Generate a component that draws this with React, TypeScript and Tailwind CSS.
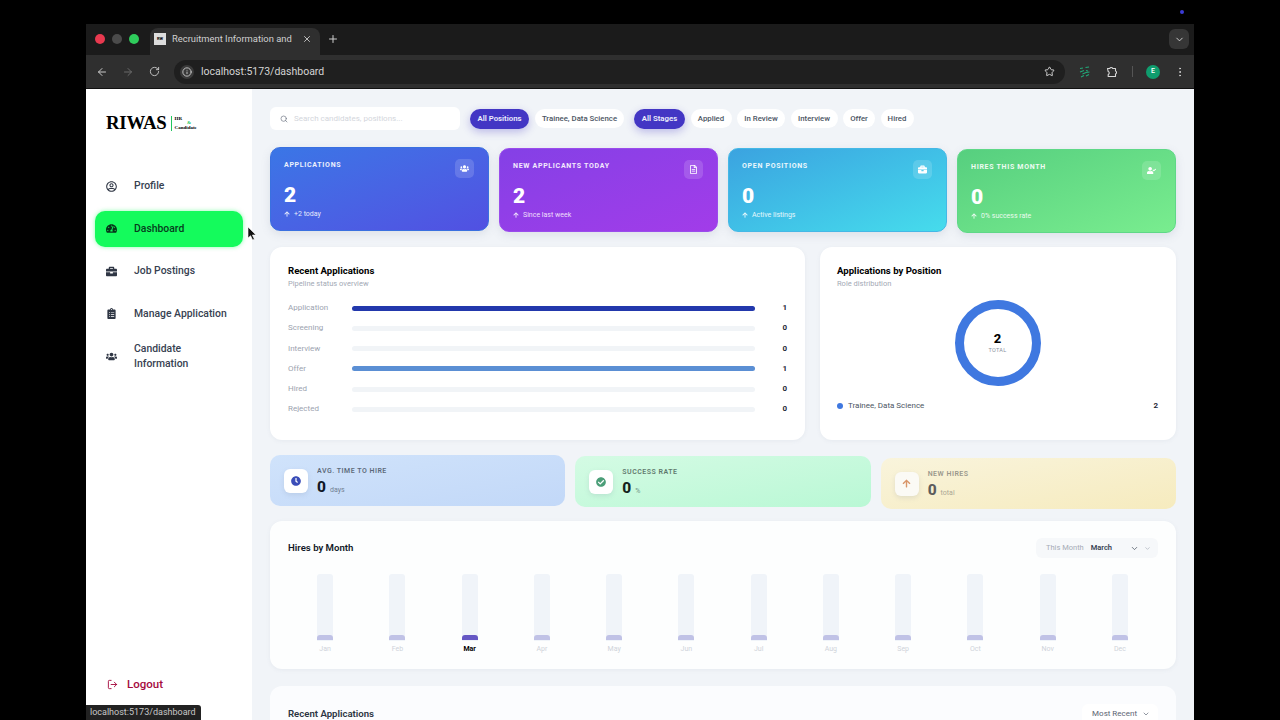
import { ArrowLeft, ArrowRight, ChevronDown, EllipsisVertical, Info, LogOut, Plus, RotateCw, Search, Star, X } from "lucide-react"
import { FaArrowUp, FaBriefcase, FaCheckCircle, FaClipboardList, FaClock, FaRegFileAlt, FaRegUserCircle, FaTachometerAlt, FaUserCheck, FaUsers } from "react-icons/fa"

const nav = [
  { label: "Profile", icon: FaRegUserCircle },
  { label: "Dashboard", icon: FaTachometerAlt, active: true },
  { label: "Job Postings", icon: FaBriefcase },
  { label: "Manage Application", icon: FaClipboardList },
]

const cards = [
  { title: "APPLICATIONS", value: "2", note: "+2 today", icon: FaUsers, bg: "mt-0 bg-gradient-to-br from-[#3a76e6] to-[#5150e2] border-[#3a70e0]", text: "text-[#e4e9fd]" },
  { title: "NEW APPLICANTS TODAY", value: "2", note: "Since last week", icon: FaRegFileAlt, bg: "mt-[0.5px] bg-gradient-to-br from-[#8440e6] to-[#a23ce9] border-[#9a4cec]", text: "text-[#efdffc]" },
  { title: "OPEN POSITIONS", value: "0", note: "Active listings", icon: FaBriefcase, bg: "mt-px bg-gradient-to-br from-[#3ba3e0] to-[#46dcec] border-[#45b8e6]", text: "text-[#e6f8fc]" },
  { title: "HIRES THIS MONTH", value: "0", note: "0% success rate", icon: FaUserCheck, bg: "mt-[2px] bg-gradient-to-br from-[#56cf7f] to-[#79ed8f] border-[#5fd887]", text: "text-[#e9fbee]" },
]

const stages = [
  { label: "Application", value: 1, color: "bg-[#2238ac]" },
  { label: "Screening", value: 0, color: "" },
  { label: "Interview", value: 0, color: "" },
  { label: "Offer", value: 1, color: "bg-[#5b8fd4]" },
  { label: "Hired", value: 0, color: "" },
  { label: "Rejected", value: 0, color: "" },
]

const months = ["Jan", "Feb", "Mar", "Apr", "May", "Jun", "Jul", "Aug", "Sep", "Oct", "Nov", "Dec"]

function Chip({ label, width, active }: { label: string; width: string; active?: boolean }) {
  return (
    <span
      className={
        active
          ? `flex h-[20px] items-center justify-center rounded-full bg-[#4336c4] text-[7.8px] font-semibold text-[#eeeefc] shadow-[0_3px_8px_rgba(67,54,196,0.3)] ${width}`
          : `flex h-[19px] items-center justify-center rounded-full bg-white text-[7.8px] font-medium text-[#4b5563] ${width}`
      }
    >
      {label}
    </span>
  )
}

function Browser() {
  return (
    <div className="font-[Roboto,sans-serif]">
      <div className="flex h-[31px] items-end bg-[#1b1b1b] pl-[9px]">
        <div className="mb-[11px] flex items-center gap-[7px]">
          <span className="h-[10px] w-[10px] rounded-full bg-[#e8394f]" />
          <span className="h-[10px] w-[10px] rounded-full bg-[#4b4b4b]" />
          <span className="h-[10px] w-[10px] rounded-full bg-[#2fcc5c]" />
        </div>
        <div className="ml-[11px] flex h-[27px] w-[170px] items-center rounded-t-[8px] bg-[#2f2f2f] pb-[5px] pl-[4px]">
          <span className="flex h-[12px] w-[12px] items-center justify-center bg-[#ddd] text-[4px] font-bold text-black">RW</span>
          <span className="ml-[6px] w-[122px] overflow-hidden whitespace-nowrap text-[9.4px] text-[#d0d0d0]">Recruitment Information and</span>
          <X size={10} className="ml-[8px] text-[#d8d8d8]" />
        </div>
        <Plus size={12} className="mb-[10px] ml-[7px] text-[#cfcfcf]" />
        <div className="mb-[6px] ml-auto mr-[5px] flex h-[20px] w-[20px] items-center justify-center rounded-md bg-[#363636]">
          <ChevronDown size={11} className="text-[#d8d8d8]" />
        </div>
      </div>
      <div className="flex h-[34px] items-center border-b border-[#111] bg-[#2f2f2f] pl-[10px]">
        <ArrowLeft size={12} className="text-[#c9c9c9]" />
        <ArrowRight size={12} className="ml-[14px] text-[#6b6b6b]" />
        <RotateCw size={11} className="ml-[15px] text-[#c9c9c9]" />
        <div className="ml-[14px] flex h-[24px] w-[891px] items-center rounded-full bg-[#1f1f1f] pl-[6px]">
          <span className="flex h-[14px] w-[14px] items-center justify-center rounded-full bg-[#3a3a3a]">
            <Info size={10} className="text-[#d8d8d8]" />
          </span>
          <span className="ml-[7px] text-[10.5px] text-[#d4d4d4]">localhost:5173/dashboard</span>
          <Star size={11} className="ml-auto mr-[10px] text-[#dcdcdc]" />
        </div>
        <svg width="12" height="12" viewBox="0 0 12 12" className="ml-[14px]" fill="none" stroke="#22a878" strokeWidth="1.1">
          <path d="M1 2.5 4 2M6.5 1.5 10 1M1 6 5 4.5M7 4.5 9 5M3.5 8 7 6.5 10.5 6M2 11 5 9.5M7 10 10 8.5" />
        </svg>
        <svg width="13" height="13" viewBox="0 0 13 13" className="ml-[15px]" fill="none" stroke="#d8d8d8" strokeWidth="1.1" strokeLinejoin="round">
          <path d="M1.5 3.5h2.2a1.6 1.6 0 0 1 3 0h2.8v2.4a1.6 1.6 0 0 1 0 3v2.6H2.2V9.6a1.6 1.6 0 0 0 0-3z" />
        </svg>
        <span className="ml-[13px] h-[11px] w-px bg-[#555]" />
        <span className="ml-[13px] flex h-[14px] w-[14px] items-center justify-center rounded-full bg-[#0f9d6e] text-[7px] font-medium text-white">E</span>
        <EllipsisVertical size={12} className="ml-[14px] text-[#cfcfcf]" />
      </div>
    </div>
  )
}

function Sidebar() {
  return (
    <aside className="flex w-[166px] shrink-0 flex-col bg-white font-[Roboto,sans-serif]">
      <div className="flex h-[32px] items-center pl-[20px] pt-[34px]">
        <span className="font-['Liberation_Serif',serif] text-[18.8px] font-bold leading-none tracking-[-0.2px] text-black">RIWAS</span>
        <span className="ml-[4px] h-[15px] w-px bg-[#22c55e]" />
        <div className="ml-[3px] font-['Liberation_Serif',serif] text-[5px] font-bold leading-[5px] text-black">
          <div className="flex h-[9px] items-start">
            HR
            <span className="ml-[5px] self-end text-[#22c55e]">&amp;</span>
          </div>
          <div>Candidate</div>
        </div>
      </div>
      <nav className="mt-[45px] flex flex-col gap-[6.5px] px-[9px]">
        {nav.map((item) => (
          <div
            key={item.label}
            className={
              item.active
                ? "flex h-[36px] w-[148px] items-center rounded-[10px] bg-[#14fb5c] pl-[11px] text-[#063d1c] shadow-[0_0_4px_rgba(20,251,92,0.5)]"
                : "flex h-[36px] items-center pl-[11px] text-[#374151]"
            }
          >
            <item.icon size={11} className={item.active ? "text-[#07331a]" : "text-[#2f3644]"} />
            <span className="ml-[17px] text-[10.4px] font-medium">{item.label}</span>
          </div>
        ))}
        <div className="flex h-[36px] items-center pl-[11px] text-[#374151]">
          <FaUsers size={11} className="text-[#2f3644]" />
          <span className="ml-[17px] text-[10.4px] font-medium leading-[15.5px]">
            Candidate
            <br />
            Information
          </span>
        </div>
      </nav>
      <div className="mb-[27px] mt-auto flex items-center pl-[21px] text-[#a50a3d]">
        <LogOut size={11} />
        <span className="ml-[9px] text-[11.5px] font-medium">Logout</span>
      </div>
    </aside>
  )
}

function StatCard({ card }: { card: (typeof cards)[number] }) {
  return (
    <div className={`h-[84px] rounded-[10px] border pl-[13px] pr-[14px] pt-[11px] shadow-[0_3px_10px_rgba(100,116,139,0.15)] ${card.bg}`}>
      <div className="flex items-start justify-between">
        <span className="pt-[1px] text-[7px] font-bold tracking-[0.7px] text-white/90">{card.title}</span>
        <span className="flex h-[19px] w-[19px] items-center justify-center rounded-[5px] bg-white/15">
          <card.icon size={9} className="text-white" />
        </span>
      </div>
      <div className="mt-[5px] text-[21px] font-black leading-[24px] text-white">{card.value}</div>
      <div className={`mt-[2px] flex items-center text-[7px] ${card.text}`}>
        <FaArrowUp size={6} className="mr-[4px]" />
        {card.note}
      </div>
    </div>
  )
}

function Metric({ label, value, unit, icon, wrap, box }: { label: string; value: string; unit: string; icon: React.ReactNode; wrap: string; box: string }) {
  return (
    <div className={`flex h-[51px] items-center rounded-[10px] pl-[14px] ${wrap}`}>
      <span className={`flex h-[24px] w-[24px] items-center justify-center rounded-[6px] shadow-[0_2px_5px_rgba(100,116,139,0.15)] ${box}`}>{icon}</span>
      <div className="ml-[9px] pt-[2px]">
        <div className="text-[7px] font-semibold leading-[9px] tracking-[0.5px] opacity-60">{label}</div>
        <div className="mt-[3px] flex items-baseline">
          <span className="text-[15.5px] font-extrabold leading-[17px]">{value}</span>
          <span className="ml-[4px] text-[7px] opacity-50">{unit}</span>
        </div>
      </div>
    </div>
  )
}

export default function App() {
  return (
    <div className="relative h-[720px] overflow-hidden bg-black pl-[86px] pr-[86px] pt-[24px]">
      <div className="flex h-[696px] flex-col overflow-hidden">
        <Browser />
        <div className="flex min-h-0 flex-1">
          <Sidebar />
          <main className="min-w-0 flex-1 bg-[#f1f4f8] px-[18px] pt-[18px] font-[Roboto,sans-serif]">
            <div className="flex h-[23px] items-center">
              <div className="flex h-[23px] w-[190px] items-center rounded-[6px] bg-white pl-[10px]">
                <Search size={8} className="text-[#6b7280]" />
                <span className="ml-[6px] text-[8px] text-[#d3d6dc]">Search candidates, positions...</span>
              </div>
              <div className="ml-[10px] flex items-center gap-[6px]">
                <Chip label="All Positions" width="w-[59px]" active />
                <Chip label="Trainee, Data Science" width="w-[89px]" />
              </div>
              <div className="ml-[10px] flex items-center gap-[5.5px]">
                <Chip label="All Stages" width="w-[51px]" active />
                <Chip label="Applied" width="w-[41px]" />
                <Chip label="In Review" width="w-[48px]" />
                <Chip label="Interview" width="w-[47px]" />
                <Chip label="Offer" width="w-[32px]" />
                <Chip label="Hired" width="w-[33px]" />
              </div>
            </div>

            <div className="mt-[17px] grid h-[86px] grid-cols-4 items-start gap-[10px]">
              {cards.map((card) => (
                <StatCard key={card.title} card={card} />
              ))}
            </div>

            <div className="mt-[14px] flex h-[193px] gap-[15px]">
              <section className="w-[535px] rounded-[12px] bg-white px-[18px] pt-[17px] shadow-[0_1px_4px_rgba(100,116,139,0.08)]">
                <h2 className="text-[9.6px] font-bold leading-[13px] text-black">Recent Applications</h2>
                <p className="mt-[1px] text-[7.5px] leading-[12px] text-[#a3a9b5]">Pipeline status overview</p>
                <div className="mt-[12px] flex flex-col gap-[8.3px]">
                  {stages.map((s) => (
                    <div key={s.label} className="flex h-[12px] items-center">
                      <span className="w-[64px] text-[8px] text-[#9ca3af]">{s.label}</span>
                      <div className="h-[5px] w-[403px] rounded-full bg-[#f1f4f7]">
                        {s.value > 0 && <div className={`h-full w-full rounded-full ${s.color}`} />}
                      </div>
                      <span className="ml-auto text-[8px] font-bold text-[#1f2937]">{s.value}</span>
                    </div>
                  ))}
                </div>
              </section>
              <section className="flex-1 rounded-[12px] bg-white pl-[17px] pr-[18px] pt-[17px] shadow-[0_1px_4px_rgba(100,116,139,0.08)]">
                <h2 className="text-[9.6px] font-bold leading-[13px] text-black">Applications by Position</h2>
                <p className="mt-[1px] text-[7.5px] leading-[12px] text-[#a3a9b5]">Role distribution</p>
                <div className="mt-[10px] flex justify-center">
                  <div className="flex h-[86px] w-[86px] flex-col items-center justify-center rounded-full border-[9.5px] border-[#3f78e0]">
                    <span className="text-[13px] font-extrabold leading-[14px] text-black">2</span>
                    <span className="text-[5.5px] tracking-[0.3px] text-[#8b929e]">TOTAL</span>
                  </div>
                </div>
                <div className="mt-[14px] flex items-center text-[8px]">
                  <span className="h-[6px] w-[6px] rounded-full bg-[#3f78e0]" />
                  <span className="ml-[5px] text-[#4b5563]">Trainee, Data Science</span>
                  <span className="ml-auto font-bold text-[#1f2937]">2</span>
                </div>
              </section>
            </div>

            <div className="mt-[15px] grid h-[54px] grid-cols-3 items-start gap-[10px]">
              <Metric
                label="AVG. TIME TO HIRE"
                value="0"
                unit="days"
                icon={<FaClock size={10} className="text-[#3b4db8]" />}
                wrap="bg-gradient-to-br from-[#d0e3fb] to-[#c2d8f8] text-[#111827]"
                box="bg-white"
              />
              <div className="mt-px">
                <Metric
                  label="SUCCESS RATE"
                  value="0"
                  unit="%"
                  icon={<FaCheckCircle size={10} className="text-[#4b9e78]" />}
                  wrap="bg-gradient-to-br from-[#d4fbe4] to-[#b9f8d5] text-[#14231c]"
                  box="bg-white"
                />
              </div>
              <div className="mt-[3px]">
                <Metric
                  label="NEW HIRES"
                  value="0"
                  unit="total"
                  icon={<FaArrowUp size={9} className="text-[#d9966a]" />}
                  wrap="bg-gradient-to-br from-[#f9f4dc] to-[#f6ebbe] text-[#5c5c5c]"
                  box="bg-[#fbfaf5]"
                />
              </div>
            </div>

            <section className="mt-[12px] h-[148px] rounded-[12px] bg-[#fdfefe] px-[18px] pt-[17px] shadow-[0_1px_4px_rgba(100,116,139,0.08)]">
              <div className="flex h-[20px] items-center justify-between">
                <h2 className="text-[9.6px] font-semibold text-[#111827]">Hires by Month</h2>
                <div className="flex h-[20px] w-[122px] items-center rounded-[6px] bg-[#f6f8fa] pl-[10px] text-[7.5px]">
                  <span className="text-[#a6acb6]">This Month</span>
                  <span className="ml-[7px] font-semibold text-[#374151]">March</span>
                  <ChevronDown size={9} className="ml-[18px] text-[#4b5563]" />
                  <ChevronDown size={7} className="ml-[5px] text-[#9ca3af]" />
                </div>
              </div>
              <div className="mt-[16px] grid grid-cols-12 pl-px pr-[2px]">
                {months.map((m) => (
                  <div key={m} className="flex flex-col items-center">
                    <div className="flex h-[67px] w-[16px] flex-col justify-end rounded-t-[3px] bg-[#f0f4f9] pb-px">
                      <div className={`h-[5px] rounded-t-[3px] ${m === "Mar" ? "bg-[#6557c4]" : "bg-[#c0c2e6]"}`} />
                    </div>
                    <span className={`mt-[3px] text-[7px] ${m === "Mar" ? "font-bold text-black" : "text-[#cfd3da]"}`}>{m}</span>
                  </div>
                ))}
              </div>
            </section>

            <section className="mt-[17px] h-[60px] rounded-[12px] bg-[#fbfcfe] px-[18px] pt-[18px]">
              <div className="flex h-[20px] items-center justify-between">
                <h2 className="text-[9.6px] font-semibold text-[#2b3442]">Recent Applications</h2>
                <div className="flex h-[20px] items-center rounded-[6px] bg-white pl-[10px] pr-[8px] text-[8px] text-[#5b6472]">
                  Most Recent
                  <ChevronDown size={8} className="ml-[5px]" />
                </div>
              </div>
            </section>
          </main>
        </div>
      </div>

      <span className="absolute left-[1180px] top-[10px] h-[4px] w-[4px] rounded-full bg-[#3b3bd6]" />
      <svg width="10" height="15" viewBox="0 0 10 15" className="absolute left-[247px] top-[226px]">
        <path d="M1 1v11l2.6-2.3L5.6 14l1.8-.8-2-4.2H9z" fill="#111" stroke="#fff" strokeWidth="0.6" />
      </svg>
      <div className="absolute left-[86px] top-[705px] flex h-[15px] w-[115px] items-center rounded-tr-[3px] bg-[#222] pl-[4px] font-[Roboto,sans-serif] text-[9px] text-[#c8c8c8]">
        localhost:5173/dashboard
      </div>
    </div>
  )
}
